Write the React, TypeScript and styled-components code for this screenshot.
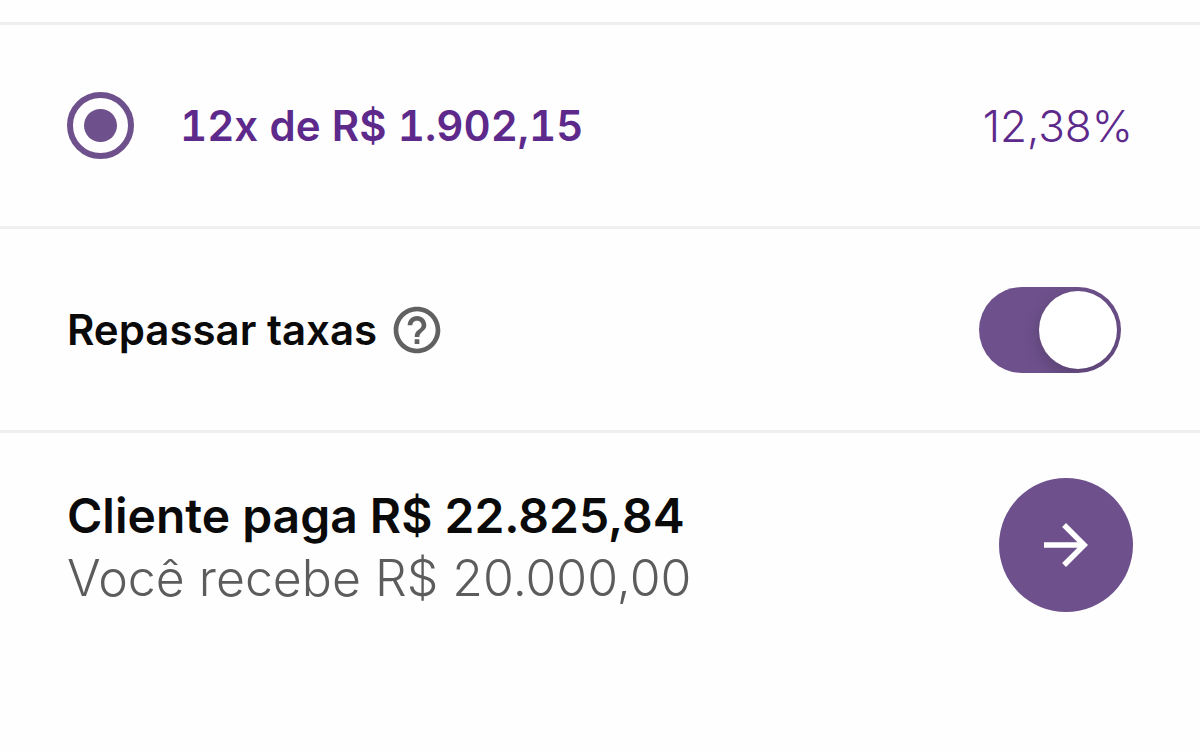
import React, { useState } from "react";
import styled, { createGlobalStyle } from "styled-components";
import { MdArrowForward, MdHelpOutline } from "react-icons/md";

const purple = "#6e518c";
const purpleText = "#5d2a8c";

const GlobalStyle = createGlobalStyle`
  *, *::before, *::after { box-sizing: border-box; }
  body {
    margin: 0;
    background: #fefefe;
    color: #0a0a0a;
    font-family: Inter, "Liberation Sans", sans-serif;
  }
`;

const Sheet = styled.main`
  width: 100%;
`;

const Row = styled.section<{ $height: number }>`
  display: flex;
  align-items: center;
  justify-content: space-between;
  min-height: ${(p) => p.$height}px;
  padding: 0 67px;
  border-bottom: 3px solid #efefef;
`;

const Option = styled.label`
  display: flex;
  align-items: center;
  gap: 46px;
  cursor: pointer;
`;

const Radio = styled.input`
  appearance: none;
  display: grid;
  place-items: center;
  width: 67px;
  height: 67px;
  margin: 0;
  border: 6px solid ${purple};
  border-radius: 50%;

  &:checked::before {
    content: "";
    width: 33px;
    height: 33px;
    border-radius: 50%;
    background: ${purple};
  }
`;

const Text = styled.span<{ $size?: number; $weight?: number; $color?: string; $tabular?: boolean }>`
  font-size: ${(p) => p.$size ?? 42}px;
  line-height: 62px;
  font-weight: ${(p) => p.$weight ?? 600};
  font-variant-numeric: ${(p) => (p.$tabular ? "tabular-nums" : "normal")};
  color: ${(p) => p.$color ?? "#0a0a0a"};
`;

const Setting = styled.div`
  display: flex;
  align-items: center;
  gap: 12px;
`;

const HelpButton = styled.button`
  display: flex;
  padding: 0;
  border: 0;
  background: none;
  color: #616161;
  cursor: pointer;
`;

const Switch = styled.input`
  appearance: none;
  display: flex;
  align-items: center;
  width: 142px;
  height: 86px;
  margin: 0 12px 0 0;
  padding: 0 4px;
  border-radius: 43px;
  background: #c8c8c8;
  overflow: hidden;
  cursor: pointer;

  &::before {
    content: "";
    width: 78px;
    height: 78px;
    border-radius: 50%;
    background: #fff;
    box-shadow: 0 6px 18px rgba(0, 0, 0, 0.2);
  }

  &:checked {
    justify-content: flex-end;
    background: ${purple};
  }
`;

const Footer = styled.footer`
  display: flex;
  align-items: center;
  justify-content: space-between;
  padding: 45px 67px;
`;

const Totals = styled.div`
  display: flex;
  flex-direction: column;
  padding-top: 4px;
`;

const NextButton = styled.button`
  display: grid;
  place-items: center;
  width: 134px;
  height: 134px;
  padding: 0;
  border: 0;
  border-radius: 50%;
  background: ${purple};
  color: #fff;
  cursor: pointer;
`;

export default function App() {
  const [passFees, setPassFees] = useState(true);

  return (
    <>
      <GlobalStyle />
      <Sheet>
        <Row as="div" $height={25} />
        <Row $height={204}>
          <Option>
            <Radio type="radio" name="installments" defaultChecked />
            <Text $color={purpleText} $tabular>12x de R$ 1.902,15</Text>
          </Option>
          <Text $size={44} $weight={300} $color={purpleText}>12,38%</Text>
        </Row>
        <Row $height={204}>
          <Setting>
            <Text as="label" htmlFor="pass-fees">Repassar taxas</Text>
            <HelpButton type="button" aria-label="Ajuda">
              <MdHelpOutline size={56} />
            </HelpButton>
          </Setting>
          <Switch
            id="pass-fees"
            type="checkbox"
            role="switch"
            checked={passFees}
            onChange={(e) => setPassFees(e.target.checked)}
          />
        </Row>
        <Footer>
          <Totals>
            <Text $size={48}>Cliente paga R$ 22.825,84</Text>
            <Text $size={50} $weight={300} $color="#5c5c5c">Você recebe R$ 20.000,00</Text>
          </Totals>
          <NextButton type="button" aria-label="Continuar">
            <MdArrowForward size={66} />
          </NextButton>
        </Footer>
      </Sheet>
    </>
  );
}
